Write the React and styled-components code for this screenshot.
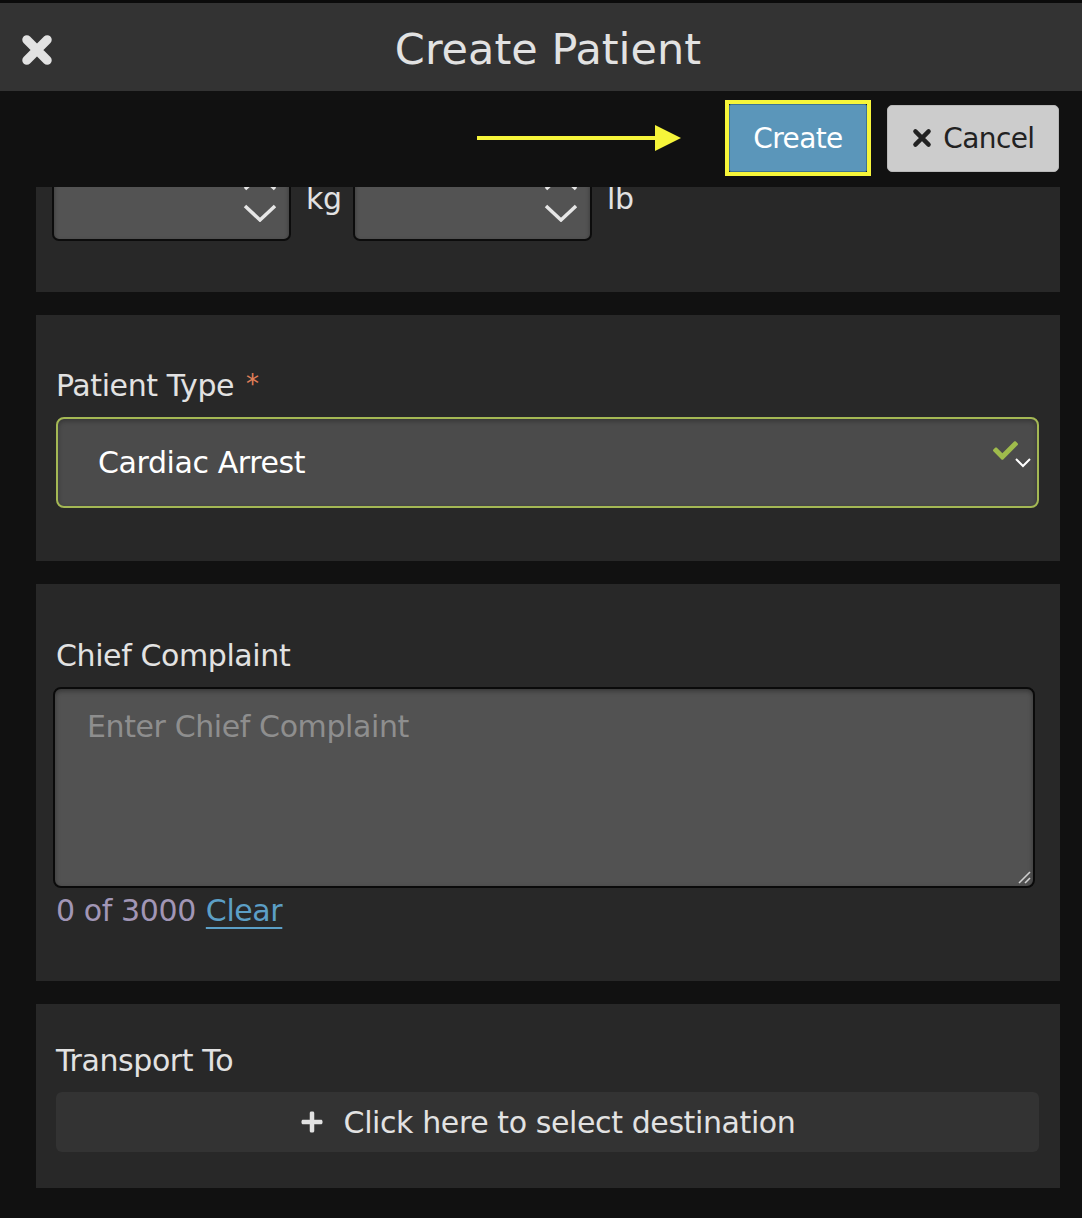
import React, { useLayoutEffect, useRef } from "react";
import styled, { createGlobalStyle } from "styled-components";
import { FaPlus, FaCheck } from "react-icons/fa";

const GlobalStyle = createGlobalStyle`
  html, body {
    margin: 0;
    padding: 0;
    background: #111111;
    font-family: "DejaVu Sans", "Open Sans", sans-serif;
  }
  * { box-sizing: border-box; }
`;

const Screen = styled.div`
  width: 1082px;
  height: 1218px;
  display: flex;
  flex-direction: column;
  background: #111111;
  border-top: 3px solid #0b0b0b;
  overflow: hidden;
`;

const Header = styled.div`
  height: 88px;
  flex-shrink: 0;
  background: #333333;
  display: grid;
  grid-template-columns: 80px 1fr 66px;
  align-items: center;
`;

const CloseButton = styled.div`
  display: flex;
  align-items: center;
  justify-content: flex-start;
  padding: 5px 0 0 20px;
`;

const Title = styled.h1`
  margin: 0;
  padding-top: 4px;
  text-align: center;
  color: #e2e2e2;
  font-weight: normal;
  font-size: 43px;
  letter-spacing: 0;
`;

const Toolbar = styled.div`
  height: 96px;
  flex-shrink: 0;
  display: flex;
  align-items: center;
  justify-content: flex-end;
  padding: 0 23px 2px 0;
  gap: 16px;
`;

const Arrow = styled.svg`
  width: 204px;
  height: 30px;
  margin-right: 28px;
`;

const Highlight = styled.div`
  border: 4px solid #f6f53a;
`;

const Button = styled.button`
  height: ${(p) => (p.$primary ? "68px" : "67px")};
  padding: 0 ${(p) => (p.$primary ? "23px" : "23.5px")};
  border: 1px solid ${(p) => (p.$primary ? "#3f7394" : "#b8b8b8")};
  border-radius: ${(p) => (p.$primary ? "2px" : "5px")};
  background: ${(p) => (p.$primary ? "#5b96ba" : "#cccccc")};
  color: ${(p) => (p.$primary ? "#ffffff" : "#222222")};
  font-family: inherit;
  font-size: 28px;
  letter-spacing: -0.6px;
  display: flex;
  align-items: center;
  gap: 10px;
`;

const Body = styled.div`
  flex: 1;
  overflow: hidden;
  padding: 0 22px 40px 36px;
`;

const Card = styled.section`
  background: #282828;
  padding: ${(p) => p.$pad || "52px 21px 53px 20px"};
  margin-bottom: 23px;
`;

const Label = styled.div`
  height: 36px;
  display: flex;
  align-items: center;
  gap: 12px;
  color: #e2e2e2;
  font-size: 30px;
  letter-spacing: -0.4px;
  margin-bottom: 14px;
`;

const Required = styled.span`
  color: #e07f58;
  font-size: 26px;
  align-self: flex-start;
  margin-top: 2px;
`;

const WeightRow = styled.div`
  display: flex;
  align-items: center;
  margin-left: -4px;
`;

const NumberBox = styled.div`
  width: 239px;
  height: 88px;
  background: #535353;
  border: 2px solid #0c0c0c;
  border-radius: 7px;
  box-shadow: inset 0 2px 4px rgba(0, 0, 0, 0.35);
  display: flex;
  flex-direction: column;
  align-items: flex-end;
  justify-content: center;
  gap: 13px;
  padding: 0 12px 0 0;
`;

const Unit = styled.span`
  width: 62px;
  padding-left: 15px;
  color: #e2e2e2;
  font-size: 30px;
  letter-spacing: -0.4px;
  line-height: 1;
  margin-top: 4px;
`;

const Select = styled.div`
  position: relative;
  height: 91px;
  border: 2px solid #a4b854;
  border-radius: 8px;
  background: #4b4b4b;
  box-shadow: inset 0 2px 5px rgba(0, 0, 0, 0.3);
  display: flex;
  align-items: center;
  padding-left: 40px;
  color: #ffffff;
  font-size: 30px;
  letter-spacing: -0.4px;
`;

const CheckMark = styled.span`
  position: absolute;
  right: 19px;
  top: 19px;
  color: #9fbb4c;
  font-size: 25px;
  line-height: 1;
`;

const SmallChevron = styled.svg`
  position: absolute;
  right: 5px;
  top: 38px;
`;

const TextArea = styled.div`
  position: relative;
  height: 201px;
  margin: 0 4px 0 -3px;
  background: #525252;
  border: 2px solid #0a0a0a;
  border-radius: 8px;
  box-shadow: inset 0 2px 5px rgba(0, 0, 0, 0.35);
  padding: 20px 32px;
  color: #8e8e8e;
  font-size: 30px;
  letter-spacing: -0.4px;
`;

const Grip = styled.svg`
  position: absolute;
  right: 2px;
  bottom: 2px;
`;

const Counter = styled.div`
  margin-top: 4px;
  height: 36px;
  display: flex;
  align-items: center;
  gap: 10px;
  color: #a196b6;
  font-size: 30px;
  letter-spacing: -0.4px;
`;

const ClearLink = styled.a`
  color: #5c9fc6;
  text-decoration: underline;
  text-underline-offset: 6px;
  text-decoration-thickness: 2px;
`;

const DestinationButton = styled.div`
  height: 60px;
  border-radius: 6px;
  background: #333333;
  display: flex;
  align-items: center;
  justify-content: center;
  gap: 20px;
  color: #e2e2e2;
  font-size: 30px;
  letter-spacing: -0.4px;
  svg {
    font-size: 24px;
  }
`;

// thick rounded "x" used by the close and cancel buttons
const XIcon = ({ size, color, weight }) => (
  <svg width={size} height={size} viewBox="0 0 30 30">
    <path
      d="M6 6 L24 24 M24 6 L6 24"
      stroke={color}
      strokeWidth={weight}
      strokeLinecap="round"
    />
  </svg>
);

const Chevron = ({ up }) => (
  <svg width="34" height="18" viewBox="0 0 34 18">
    <polyline
      points={up ? "2,16 17,2 32,16" : "2,2 17,16 32,2"}
      fill="none"
      stroke="#e6e6e6"
      strokeWidth="3.5"
    />
  </svg>
);

const WeightInput = () => (
  <NumberBox>
    <Chevron up />
    <Chevron />
  </NumberBox>
);

export default function App() {
  const bodyRef = useRef(null);
  const weightRef = useRef(null);

  // the form is scrolled so that only the bottom of the weight card shows
  useLayoutEffect(() => {
    if (bodyRef.current && weightRef.current) {
      bodyRef.current.scrollTop = weightRef.current.offsetHeight - 105;
    }
  }, []);

  return (
    <>
      <GlobalStyle />
      <Screen>
        <Header>
          <CloseButton>
            <XIcon size={34} color="#e2e2e2" weight={8} />
          </CloseButton>
          <Title>Create Patient</Title>
          <div />
        </Header>
        <Toolbar>
          <Arrow viewBox="0 0 204 30">
            <rect x="0" y="13" width="180" height="4" fill="#f6f53a" />
            <polygon points="178,2 204,15 178,28" fill="#f6f53a" />
          </Arrow>
          <Highlight>
            <Button $primary>Create</Button>
          </Highlight>
          <Button>
            <XIcon size={22} color="#222222" weight={6} />
            Cancel
          </Button>
        </Toolbar>
        <Body ref={bodyRef}>
          <Card ref={weightRef} $pad="40px 21px 51px 20px">
            <Label>Weight</Label>
            <WeightRow>
              <WeightInput />
              <Unit>kg</Unit>
              <WeightInput />
              <Unit>lb</Unit>
            </WeightRow>
          </Card>
          <Card>
            <Label>
              Patient Type <Required>*</Required>
            </Label>
            <Select>
              Cardiac Arrest
              <CheckMark>
                <FaCheck />
              </CheckMark>
              <SmallChevron width="18" height="12" viewBox="0 0 18 12">
                <polyline
                  points="2,2 9,9 16,2"
                  fill="none"
                  stroke="#ffffff"
                  strokeWidth="2"
                />
              </SmallChevron>
            </Select>
          </Card>
          <Card $pad="53px 21px 53px 20px">
            <Label>Chief Complaint</Label>
            <TextArea>
              Enter Chief Complaint
              <Grip width="14" height="14" viewBox="0 0 14 14">
                <line x1="2" y1="13" x2="13" y2="2" stroke="#cfcfcf" strokeWidth="1.6" />
                <line x1="8" y1="13" x2="13" y2="8" stroke="#cfcfcf" strokeWidth="1.6" />
              </Grip>
            </TextArea>
            <Counter>
              0 of 3000 <ClearLink>Clear</ClearLink>
            </Counter>
          </Card>
          <Card $pad="38px 21px 36px 20px">
            <Label>Transport To</Label>
            <DestinationButton>
              <FaPlus />
              Click here to select destination
            </DestinationButton>
          </Card>
        </Body>
      </Screen>
    </>
  );
}
